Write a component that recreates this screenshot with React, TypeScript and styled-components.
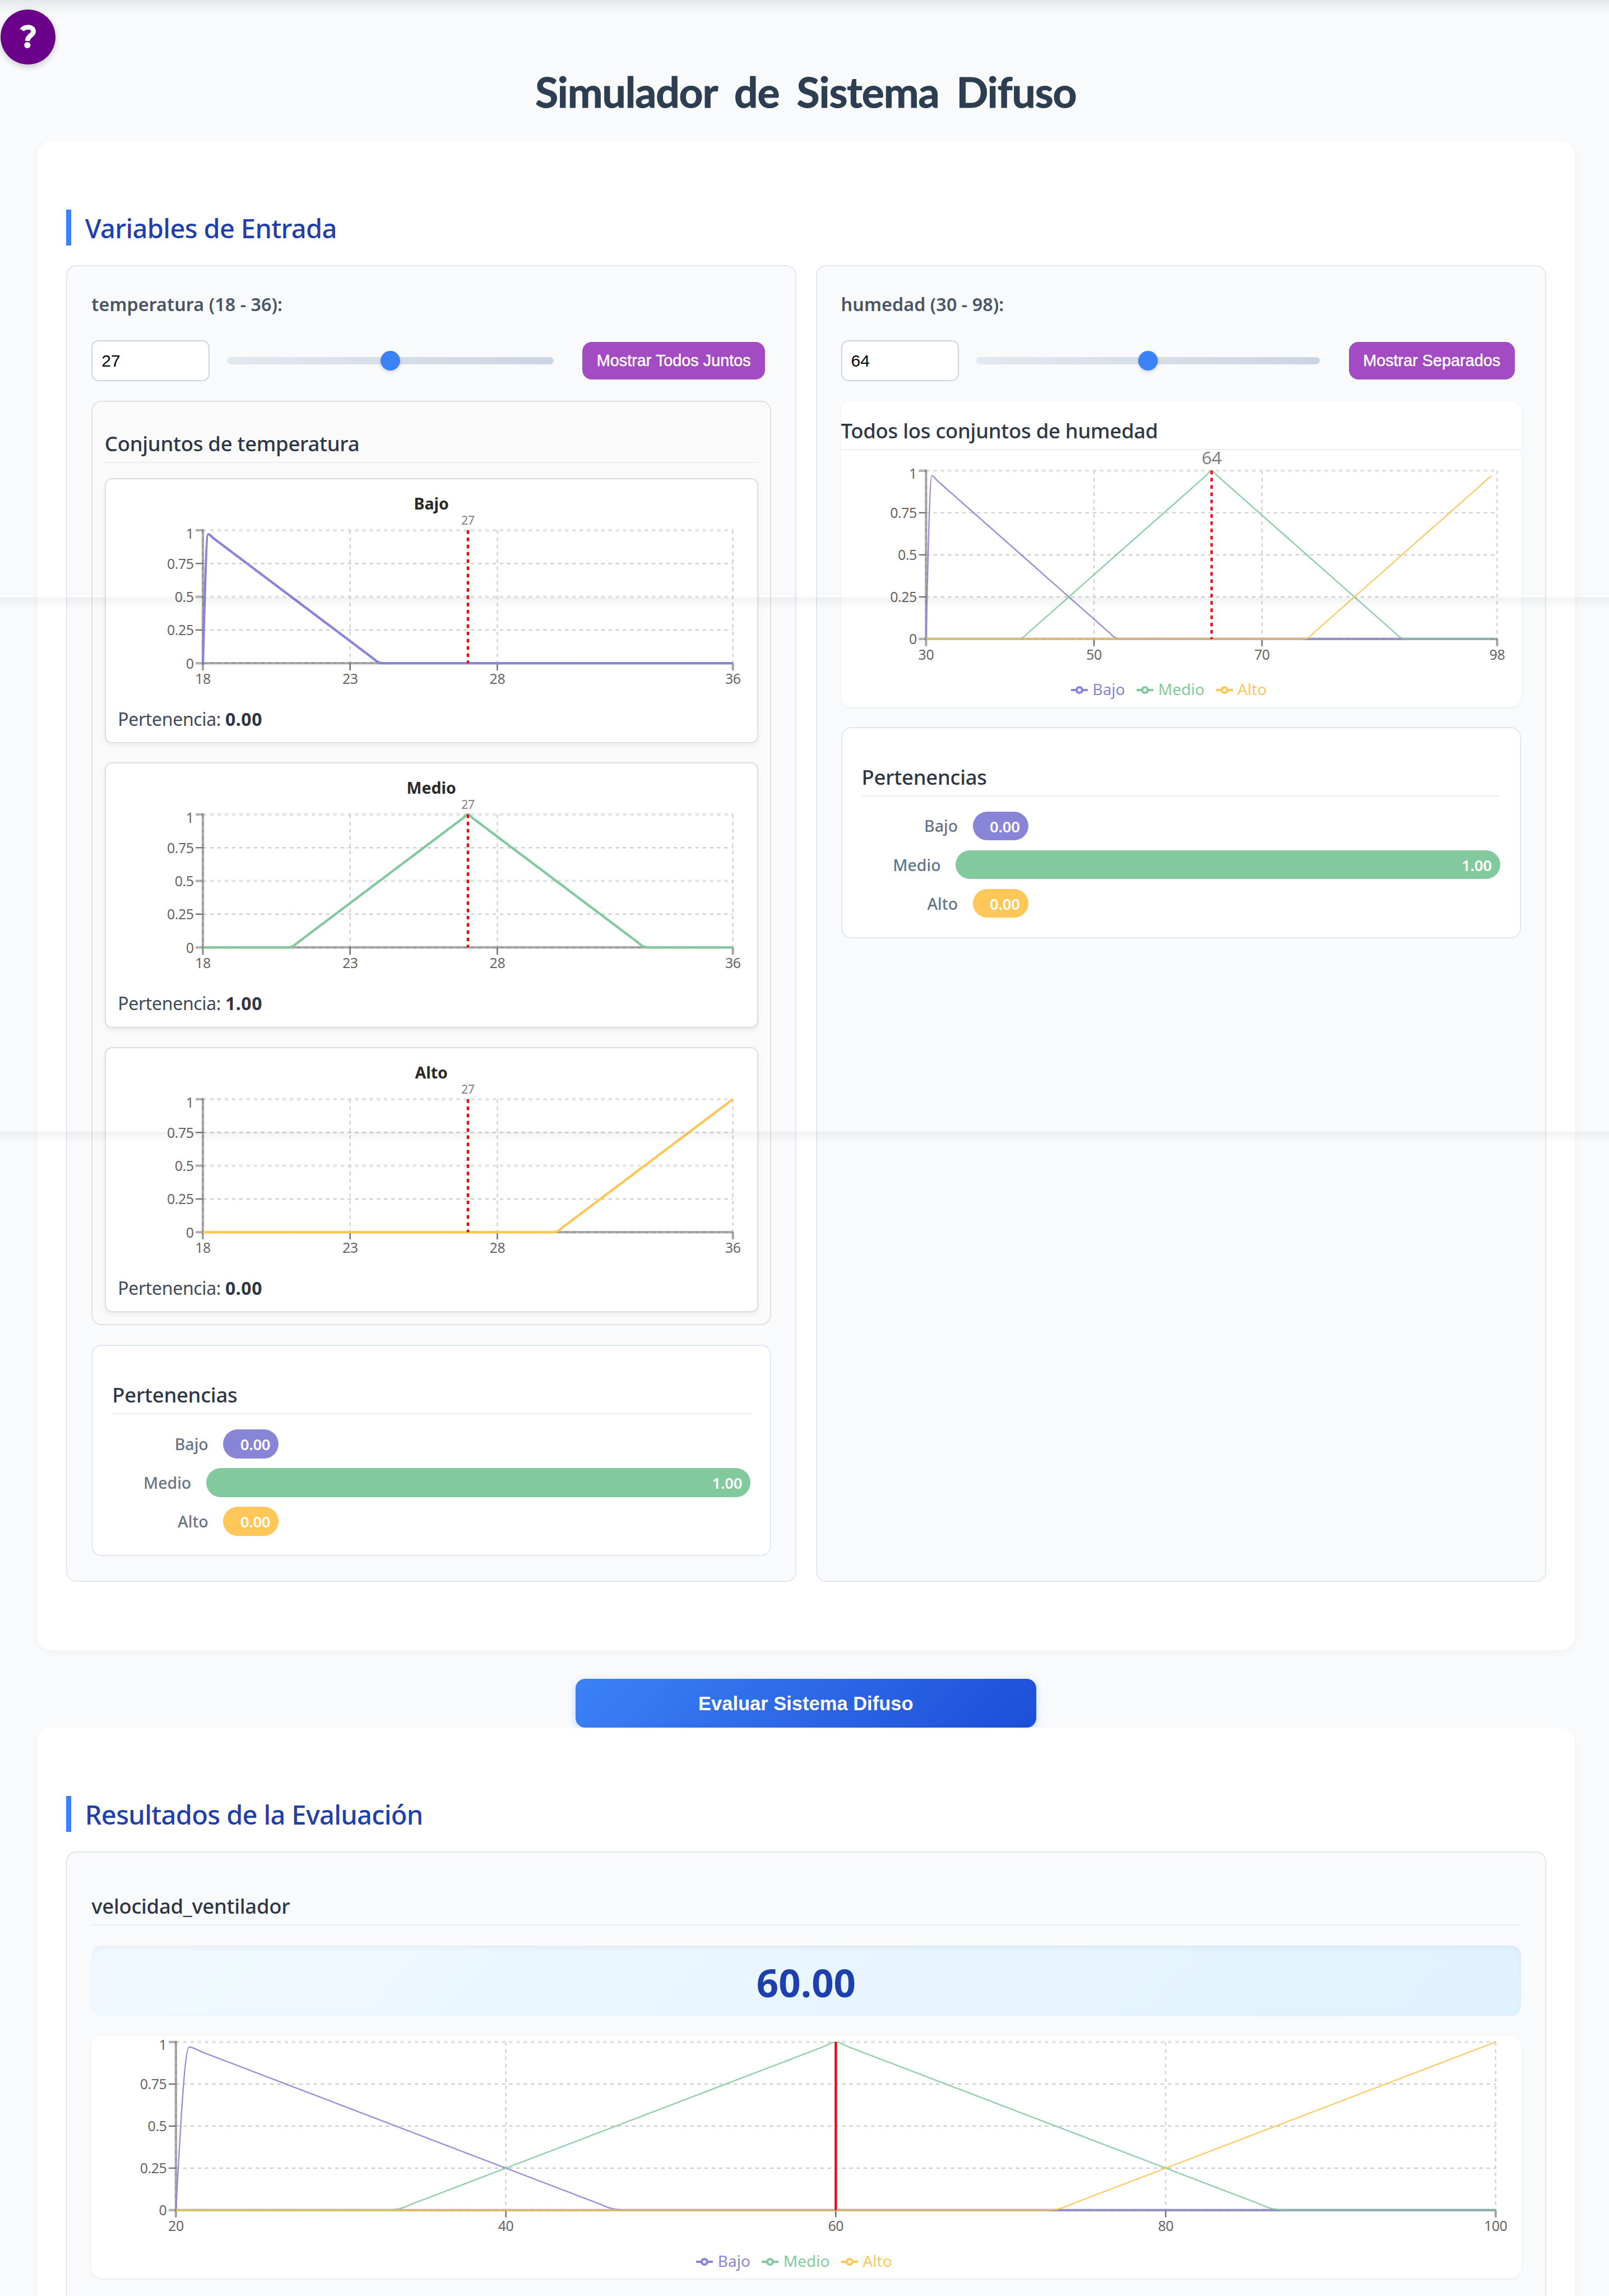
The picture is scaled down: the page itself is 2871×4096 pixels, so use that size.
import React from 'react';
import styled, { createGlobalStyle } from 'styled-components';

const UI = '"Segoe UI", "Noto Sans", sans-serif';
const ARIAL = 'Arial, "Liberation Sans", sans-serif';

const GlobalStyle = createGlobalStyle`
  *, *::before, *::after { box-sizing: border-box; }
  body { margin: 0; background: #f8fafc; font-family: ${UI}; }
  h1, h2, h3, h4, p { margin: 0; }
`;

/* ---------- page frame ---------- */

const Page = styled.div`
  position: relative;
  display: flex;
  flex-direction: column;
  width: 2871px;
  height: 4096px;
  overflow: hidden;
  padding: 113px 61px 0 65.5px;
  background: #f8fafc;
`;

const Seam = styled.div<{ $top: number; $height: number; $alpha: number }>`
  position: absolute;
  left: 0;
  right: 0;
  top: ${p => p.$top}px;
  height: ${p => p.$height}px;
  background: linear-gradient(rgba(0, 0, 0, ${p => p.$alpha}), rgba(0, 0, 0, 0));
  pointer-events: none;
`;

const HelpButton = styled.button`
  position: absolute;
  left: 1px;
  top: 17px;
  width: 98px;
  height: 98px;
  padding: 0;
  border: 0;
  border-radius: 50%;
  background: #6a008a;
  box-shadow: 0 4px 11px rgba(0, 0, 0, 0.2);
  display: flex;
  align-items: center;
  justify-content: center;
`;

const Title = styled.h1`
  height: 100px;
  line-height: 100px;
  margin-bottom: 39px;
  text-align: center;
  font-family: "Comic Sans MS", Lato, sans-serif;
  font-size: 75px;
  font-weight: 700;
  letter-spacing: -1.1px;
  word-spacing: 14px;
  -webkit-text-stroke: 1px #2c3e50;
  color: #2c3e50;
  flex: none;
`;

const Section = styled.section<{ $height: number }>`
  flex: none;
  position: relative;
  height: ${p => p.$height}px;
  padding: 122px 51.4px 0 52.8px;
  border-radius: 26px;
  background: #fff;
  box-shadow: 0 4px 13px rgba(0, 0, 0, 0.04);
`;

const SectionTitle = styled.h2`
  height: 64.4px;
  line-height: 66px;
  margin-bottom: 34.6px;
  padding-left: 24.5px;
  border-left: 9px solid #3b82f6;
  font-size: 47px;
  font-weight: 500;
  letter-spacing: -0.65px;
  color: #1e40af;
`;

const Columns = styled.div`
  display: grid;
  grid-template-columns: 1fr 1fr;
  gap: 34.5px;
  height: 2348.8px;
`;

const Panel = styled.div<{ $top: number; $height?: number }>`
  display: flex;
  flex-direction: column;
  height: ${p => (p.$height ? p.$height + 'px' : 'auto')};
  padding: ${p => p.$top}px 43px 0;
  border: 2.15px solid #e2e8f0;
  border-radius: 18px;
  background: #f8fafc;
`;

/* ---------- input controls ---------- */

const VarLabel = styled.p`
  height: 44px;
  line-height: 43px;
  margin-bottom: 42px;
  font-size: 32.3px;
  font-weight: 600;
  letter-spacing: 0.05px;
  color: #4a5568;
`;

const Controls = styled.div`
  display: flex;
  align-items: center;
  height: 73px;
  padding-right: 11px;
  margin-bottom: 35.5px;
`;

const NumberBox = styled.div`
  width: 210.5px;
  height: 73px;
  line-height: 69px;
  padding-left: 16px;
  border: 2.15px solid #cbd5e1;
  border-radius: 13px;
  background: #fff;
  font-family: ${ARIAL};
  font-size: 30px;
  color: #000;
`;

const Track = styled.div`
  flex: 1;
  display: flex;
  align-items: center;
  justify-content: center;
  height: 13px;
  margin: 0 51.5px 0 31px;
  border-radius: 6.5px;
  background: linear-gradient(to right, #e2e8f0, #cbd5e1);
`;

const Thumb = styled.div`
  width: 35px;
  height: 35px;
  flex: none;
  border-radius: 50%;
  background: #3b82f6;
  box-shadow: 0 3px 6px rgba(0, 0, 0, 0.14);
`;

const ToggleButton = styled.button`
  height: 67.5px;
  padding: 0 25.5px;
  border: 0;
  border-radius: 17px;
  background: #a34bc3;
  color: #fff;
  font-family: ${ARIAL};
  font-size: 28.8px;
  -webkit-text-stroke: 0.5px #fff;
  white-space: nowrap;
`;

/* ---------- cards ---------- */

const Heading = styled.h3<{ $gap: number }>`
  flex: none;
  height: 65px;
  line-height: 60px;
  margin-bottom: ${p => p.$gap}px;
  border-bottom: 2.15px solid #eceef0;
  font-size: 36.5px;
  font-weight: 500;
  letter-spacing: -0.3px;
  color: #2d3748;
`;

const SetGroup = styled.div`
  display: flex;
  flex-direction: column;
  flex: none;
  height: 1648.5px;
  padding: 43.5px 21.5px 0;
  border: 2.15px solid #e0e0e0;
  border-radius: 18px;
  background: #fafafa;
`;

const SetList = styled.div`
  display: flex;
  flex-direction: column;
  gap: 34px;
`;

const SetCard = styled.div`
  height: 473.5px;
  padding-top: 23px;
  border: 2.15px solid #dddddd;
  border-radius: 13px;
  background: #fff;
  box-shadow: 0 4px 9px rgba(0, 0, 0, 0.06);
`;

const SetName = styled.h4`
  height: 40px;
  line-height: 40px;
  text-align: center;
  font-size: 28.5px;
  font-weight: 700;
  color: #2a2a2a;
`;

const Membership = styled.p`
  height: 44px;
  line-height: 44px;
  padding-left: 21.5px;
  font-size: 32px;
  letter-spacing: -0.35px;
  color: #3f4a5c;

  b { font-weight: 700; color: #2d3748; letter-spacing: 0.5px; }
`;

const ChartCard = styled.div<{ $top: number; $height: number }>`
  flex: none;
  height: ${p => p.$height}px;
  padding-top: ${p => p.$top}px;
  border-radius: 18px;
  background: #fff;
  box-shadow: 0 2px 6px rgba(0, 0, 0, 0.05);
`;

const ChartSvg = styled.svg`
  display: block;
  overflow: visible;
  font-family: ${UI};
`;

const Legend = styled.ul`
  display: flex;
  justify-content: center;
  align-items: center;
  gap: 20.5px;
  height: 40px;
  margin: 9px 0 0;
  padding: 0 43px 0 0;
  list-style: none;
`;

const LegendItem = styled.li<{ $color: string }>`
  display: flex;
  align-items: center;
  gap: 8.5px;
  font-size: 28px;
  line-height: 40px;
  color: ${p => p.$color};

  svg { position: relative; top: 2px; }
`;

const BarsCard = styled.div`
  flex: none;
  height: 377px;
  margin-top: 35.5px;
  padding: 57px 35px 0;
  border: 2.15px solid #e2e8f0;
  border-radius: 18px;
  background: #fff;
`;

const Bars = styled.div`
  display: flex;
  flex-direction: column;
  gap: 17.4px;
`;

const BarRow = styled.div`
  display: flex;
  align-items: center;
  gap: 26.5px;
  height: 51.7px;
`;

const BarLabel = styled.span<{ $full: boolean }>`
  width: ${p => (p.$full ? 141 : 171.5)}px;
  text-align: right;
  font-size: 28.5px;
  font-weight: 500;
  color: #64748b;
`;

const Bar = styled.span<{ $full: boolean; $color: string }>`
  flex: ${p => (p.$full ? '1' : '0 0 99px')};
  height: 51.7px;
  line-height: 54px;
  padding-right: 15px;
  border-radius: 26px;
  text-align: right;
  background: ${p => p.$color};
  color: #fff;
  font-size: 27.5px;
  font-weight: 600;
  letter-spacing: -0.3px;
`;

/* ---------- evaluation ---------- */

const EvaluateButton = styled.button`
  flex: none;
  align-self: center;
  width: 822px;
  height: 86.5px;
  margin-top: 51.7px;
  padding: 2px 0 0;
  border: 0;
  border-radius: 17px;
  background: linear-gradient(135deg, #3b82f6, #1d4ed8);
  box-shadow: 0 4px 13px rgba(59, 130, 246, 0.3);
  color: #fff;
  font-family: ${ARIAL};
  font-size: 34.5px;
  font-weight: 700;
`;

const Result = styled.div`
  flex: none;
  height: 126.5px;
  line-height: 130px;
  margin-bottom: 34.3px;
  border-radius: 18px;
  text-align: center;
  background: linear-gradient(135deg, #f0f9ff, #e0f2fe);
  box-shadow: inset 0 4px 9px rgba(0, 0, 0, 0.05);
  font-size: 69px;
  font-weight: 700;
  color: #1e40af;
`;

/* ---------- chart drawing ---------- */

type Pt = [number, number];

const COLORS: Record<string, string> = { Bajo: '#8884d8', Medio: '#82ca9d', Alto: '#ffc658' };
const NAMES = ['Bajo', 'Medio', 'Alto'];

const round = (n: number) => Math.round(n * 100) / 100;

/* Triangular sets over a normalised domain: u runs from 0 to 1. */
function degree(name: string, u: number) {
  const third = 1 / 3;
  if (name === 'Bajo') return u <= 0 ? 0 : Math.max(0, 1 - u / third);
  if (name === 'Medio') return Math.max(0, 1 - Math.abs(u - 0.5) / third);
  return Math.max(0, (u - 2 * third) / third);
}

/* Cubic path with monotone tangents in x. */
function monotonePath(p: Pt[]) {
  const n = p.length;
  const d: number[] = [];
  for (let i = 0; i < n - 1; i++) d.push((p[i + 1][1] - p[i][1]) / (p[i + 1][0] - p[i][0]));
  const m: number[] = p.map((_, i) => {
    if (i === 0 || i === n - 1) return 0;
    const a = d[i - 1], b = d[i];
    if (a * b <= 0) return 0;
    return Math.sign(a) * Math.min(Math.abs(a), Math.abs(b), Math.abs(a + b) / 4) * 2;
  });
  m[0] = (3 * d[0] - m[1]) / 2;
  m[n - 1] = (3 * d[n - 2] - m[n - 2]) / 2;
  let s = `M${round(p[0][0])},${round(p[0][1])}`;
  for (let i = 0; i < n - 1; i++) {
    const h = (p[i + 1][0] - p[i][0]) / 3;
    s += `C${round(p[i][0] + h)},${round(p[i][1] + m[i] * h)},${round(p[i + 1][0] - h)},${round(p[i + 1][1] - m[i + 1] * h)},${round(p[i + 1][0])},${round(p[i + 1][1])}`;
  }
  return s;
}

interface ChartProps {
  sets: string[];
  min: number;
  max: number;
  ticks: number[];
  marker: number;
  markerLabel?: number;
  solid?: boolean;
  thick?: boolean;
  steps?: number;
  softRows: number[];
  width: number;
  height: number;
  left: number;
  top: number;
  plotW: number;
  plotH: number;
}

function Chart(c: ChartProps) {
  const X = (v: number) => c.left + ((v - c.min) / (c.max - c.min)) * c.plotW;
  const Y = (v: number) => c.top + (1 - v) * c.plotH;
  const right = c.left + c.plotW;
  const bottom = c.top + c.plotH;
  const steps = c.steps ?? 100;
  const rows = [1, 0.75, 0.5, 0.25, 0];
  return (
    <ChartSvg width={c.width} height={c.height}>
      <g stroke="#ccc" strokeDasharray="6.46 6.46">
        {rows.map(r => {
          const soft = c.softRows.includes(r);
          return <line key={r} x1={c.left} x2={right} y1={Y(r)} y2={Y(r)} strokeWidth={soft ? 4.3 : 2.15} strokeOpacity={soft ? 0.55 : 1} />;
        })}
        {c.ticks.map(t => <line key={t} x1={X(t)} x2={X(t)} y1={c.top} y2={bottom} strokeWidth={2.6} strokeOpacity={0.85} />)}
      </g>
      <g stroke="#666">
        <line x1={c.left} x2={c.left} y1={c.top - 2} y2={bottom + 2} strokeWidth={4.3} strokeOpacity={0.55} />
        <line x1={c.left} x2={right} y1={bottom} y2={bottom} strokeWidth={4.3} strokeOpacity={0.55} />
        {c.ticks.map(t => <line key={t} x1={X(t)} x2={X(t)} y1={bottom} y2={bottom + 12.9} strokeWidth={t === c.min || t === c.max ? 4 : 2.6} strokeOpacity={t === c.min || t === c.max ? 0.6 : 0.9} />)}
        {rows.map(r => {
          const soft = c.softRows.includes(r);
          return <line key={r} x1={c.left - 12.9} x2={c.left} y1={Y(r)} y2={Y(r)} strokeWidth={soft ? 4.3 : 2.15} strokeOpacity={soft ? 0.5 : 1} />;
        })}
      </g>
      <g fill="#666" fontSize={25} letterSpacing={-0.5}>
        {c.ticks.map(t => <text key={t} x={X(t)} y={bottom + 37} textAnchor="middle">{t}</text>)}
        {rows.map(r => <text key={r} x={c.left - 16.5} y={Y(r) + (r === 1 ? 14.5 : 9.5)} textAnchor="end">{r}</text>)}
      </g>
      {c.sets.map(name => {
        const pts: Pt[] = [];
        for (let i = 0; i <= steps; i++) pts.push([X(c.min + ((c.max - c.min) * i) / 100), Y(degree(name, i / 100))]);
        if (c.thick) return <path key={name} d={monotonePath(pts)} fill="none" stroke={COLORS[name]} strokeWidth={4.3} />;
        const up = pts.map(p => p[1] < bottom - 0.01);
        const first = Math.max(0, up.indexOf(true) - 1);
        const last = Math.min(steps, up.lastIndexOf(true) + 1);
        return (
          <g key={name} fill="none" stroke={COLORS[name]}>
            <path d={monotonePath(pts.slice(first, last + 1))} strokeWidth={2.5} strokeOpacity={0.88} />
            {first > 0 && <line x1={c.left} x2={pts[first][0]} y1={bottom} y2={bottom} strokeWidth={4.3} strokeOpacity={0.6} />}
            {last < steps && <line x1={pts[last][0]} x2={pts[steps][0]} y1={bottom} y2={bottom} strokeWidth={4.3} strokeOpacity={0.6} />}
          </g>
        );
      })}
      <line x1={X(c.marker)} x2={X(c.marker)} y1={c.top} y2={bottom} stroke="#ff0000" strokeWidth={4.2} strokeDasharray={c.solid ? undefined : '6.46 6.46'} />
      {c.markerLabel && (
        <text x={X(c.marker)} y={c.top - (c.markerLabel > 25 ? 12 : 10.5)} textAnchor="middle" fontSize={c.markerLabel} letterSpacing={-0.4} fill="#808080">{c.marker}</text>
      )}
    </ChartSvg>
  );
}

const ChartLegend = () => (
  <Legend>
    {NAMES.map(n => (
      <LegendItem key={n} $color={COLORS[n]}>
        <svg width="30" height="30" viewBox="0 0 32 32" fill="none" stroke={COLORS[n]} strokeWidth="4.4">
          <path d="M0,16h10.67A5.33,5.33,0,1,1,21.33,16H32M21.33,16A5.33,5.33,0,1,1,10.67,16" />
        </svg>
        {n}
      </LegendItem>
    ))}
  </Legend>
);

const DEGREES: Record<string, number> = { Bajo: 0, Medio: 1, Alto: 0 };

const Memberships = () => (
  <BarsCard>
    <Heading $gap={26.6}>Pertenencias</Heading>
    <Bars>
      {NAMES.map(n => (
        <BarRow key={n}>
          <BarLabel $full={DEGREES[n] === 1}>{n}</BarLabel>
          <Bar $full={DEGREES[n] === 1} $color={COLORS[n]}>{DEGREES[n].toFixed(2)}</Bar>
        </BarRow>
      ))}
    </Bars>
  </BarsCard>
);

const InputHeader = ({ label, value, action }: { label: string; value: number; action: string }) => (
  <>
    <VarLabel>{label}</VarLabel>
    <Controls>
      <NumberBox>{value}</NumberBox>
      <Track><Thumb /></Track>
      <ToggleButton>{action}</ToggleButton>
    </Controls>
  </>
);

export default function App() {
  return (
    <Page>
      <GlobalStyle />
      <Title>Simulador de Sistema Difuso</Title>

      <Section $height={2691.8}>
        <SectionTitle>Variables de Entrada</SectionTitle>
        <Columns>
          <Panel $top={46}>
            <InputHeader label="temperatura (18 - 36):" value={27} action="Mostrar Todos Juntos" />
            <SetGroup>
              <Heading $gap={27}>Conjuntos de temperatura</Heading>
              <SetList>
                {NAMES.map(n => (
                  <SetCard key={n}>
                    <SetName>{n}</SetName>
                    <Chart sets={[n]} min={18} max={36} ticks={[18, 23, 28, 36]} marker={27} markerLabel={21.5} thick
                      softRows={[1, 0.5, 0]} width={1160} height={343} left={173} top={28} plotW={945.7} plotH={237.2} />
                    <Membership>Pertenencia: <b>{DEGREES[n].toFixed(2)}</b></Membership>
                  </SetCard>
                ))}
              </SetList>
            </SetGroup>
            <Memberships />
          </Panel>

          <Panel $top={46}>
            <InputHeader label="humedad (30 - 98):" value={64} action="Mostrar Separados" />
            <ChartCard $top={22.5} $height={546}>
              <Heading $gap={0}>Todos los conjuntos de humedad</Heading>
              <Chart sets={NAMES} min={30} max={98} ticks={[30, 50, 70, 98]} marker={64} markerLabel={31.5} steps={99}
                softRows={[1, 0]} width={1213} height={397} left={151.4} top={36.7} plotW={1019} plotH={300.2} />
              <ChartLegend />
            </ChartCard>
            <Memberships />
          </Panel>
        </Columns>
      </Section>

      <EvaluateButton>Evaluar Sistema Difuso</EvaluateButton>

      <Section $height={1200}>
        <SectionTitle>Resultados de la Evaluación</SectionTitle>
        <Panel $top={65} $height={1000}>
          <Heading $gap={36}>velocidad_ventilador</Heading>
          <Result>60.00</Result>
          <ChartCard $top={0} $height={432.6}>
            <Chart sets={NAMES} min={20} max={100} ticks={[20, 40, 60, 80, 100]} marker={60} solid
              softRows={[1, 0]} width={2549} height={372} left={150.9} top={10.9} plotW={2354.8} plotH={299.9} />
            <ChartLegend />
          </ChartCard>
        </Panel>
      </Section>

      <Seam $top={0} $height={26} $alpha={0.08} />
      <Seam $top={1066.4} $height={20} $alpha={0.05} />
      <Seam $top={2018.6} $height={20} $alpha={0.05} />
      <HelpButton aria-label="Ayuda">
        <svg width="30" height="44" viewBox="0 0 30 44" fill="none" stroke="#fff">
          <path d="M4 9.5C8 3 25.5 1.5 24.5 13C24 19.5 14.5 19 14 29" strokeWidth="8.6" />
          <circle cx="13.8" cy="36.5" r="5.6" fill="#fff" stroke="none" />
        </svg>
      </HelpButton>
    </Page>
  );
}
